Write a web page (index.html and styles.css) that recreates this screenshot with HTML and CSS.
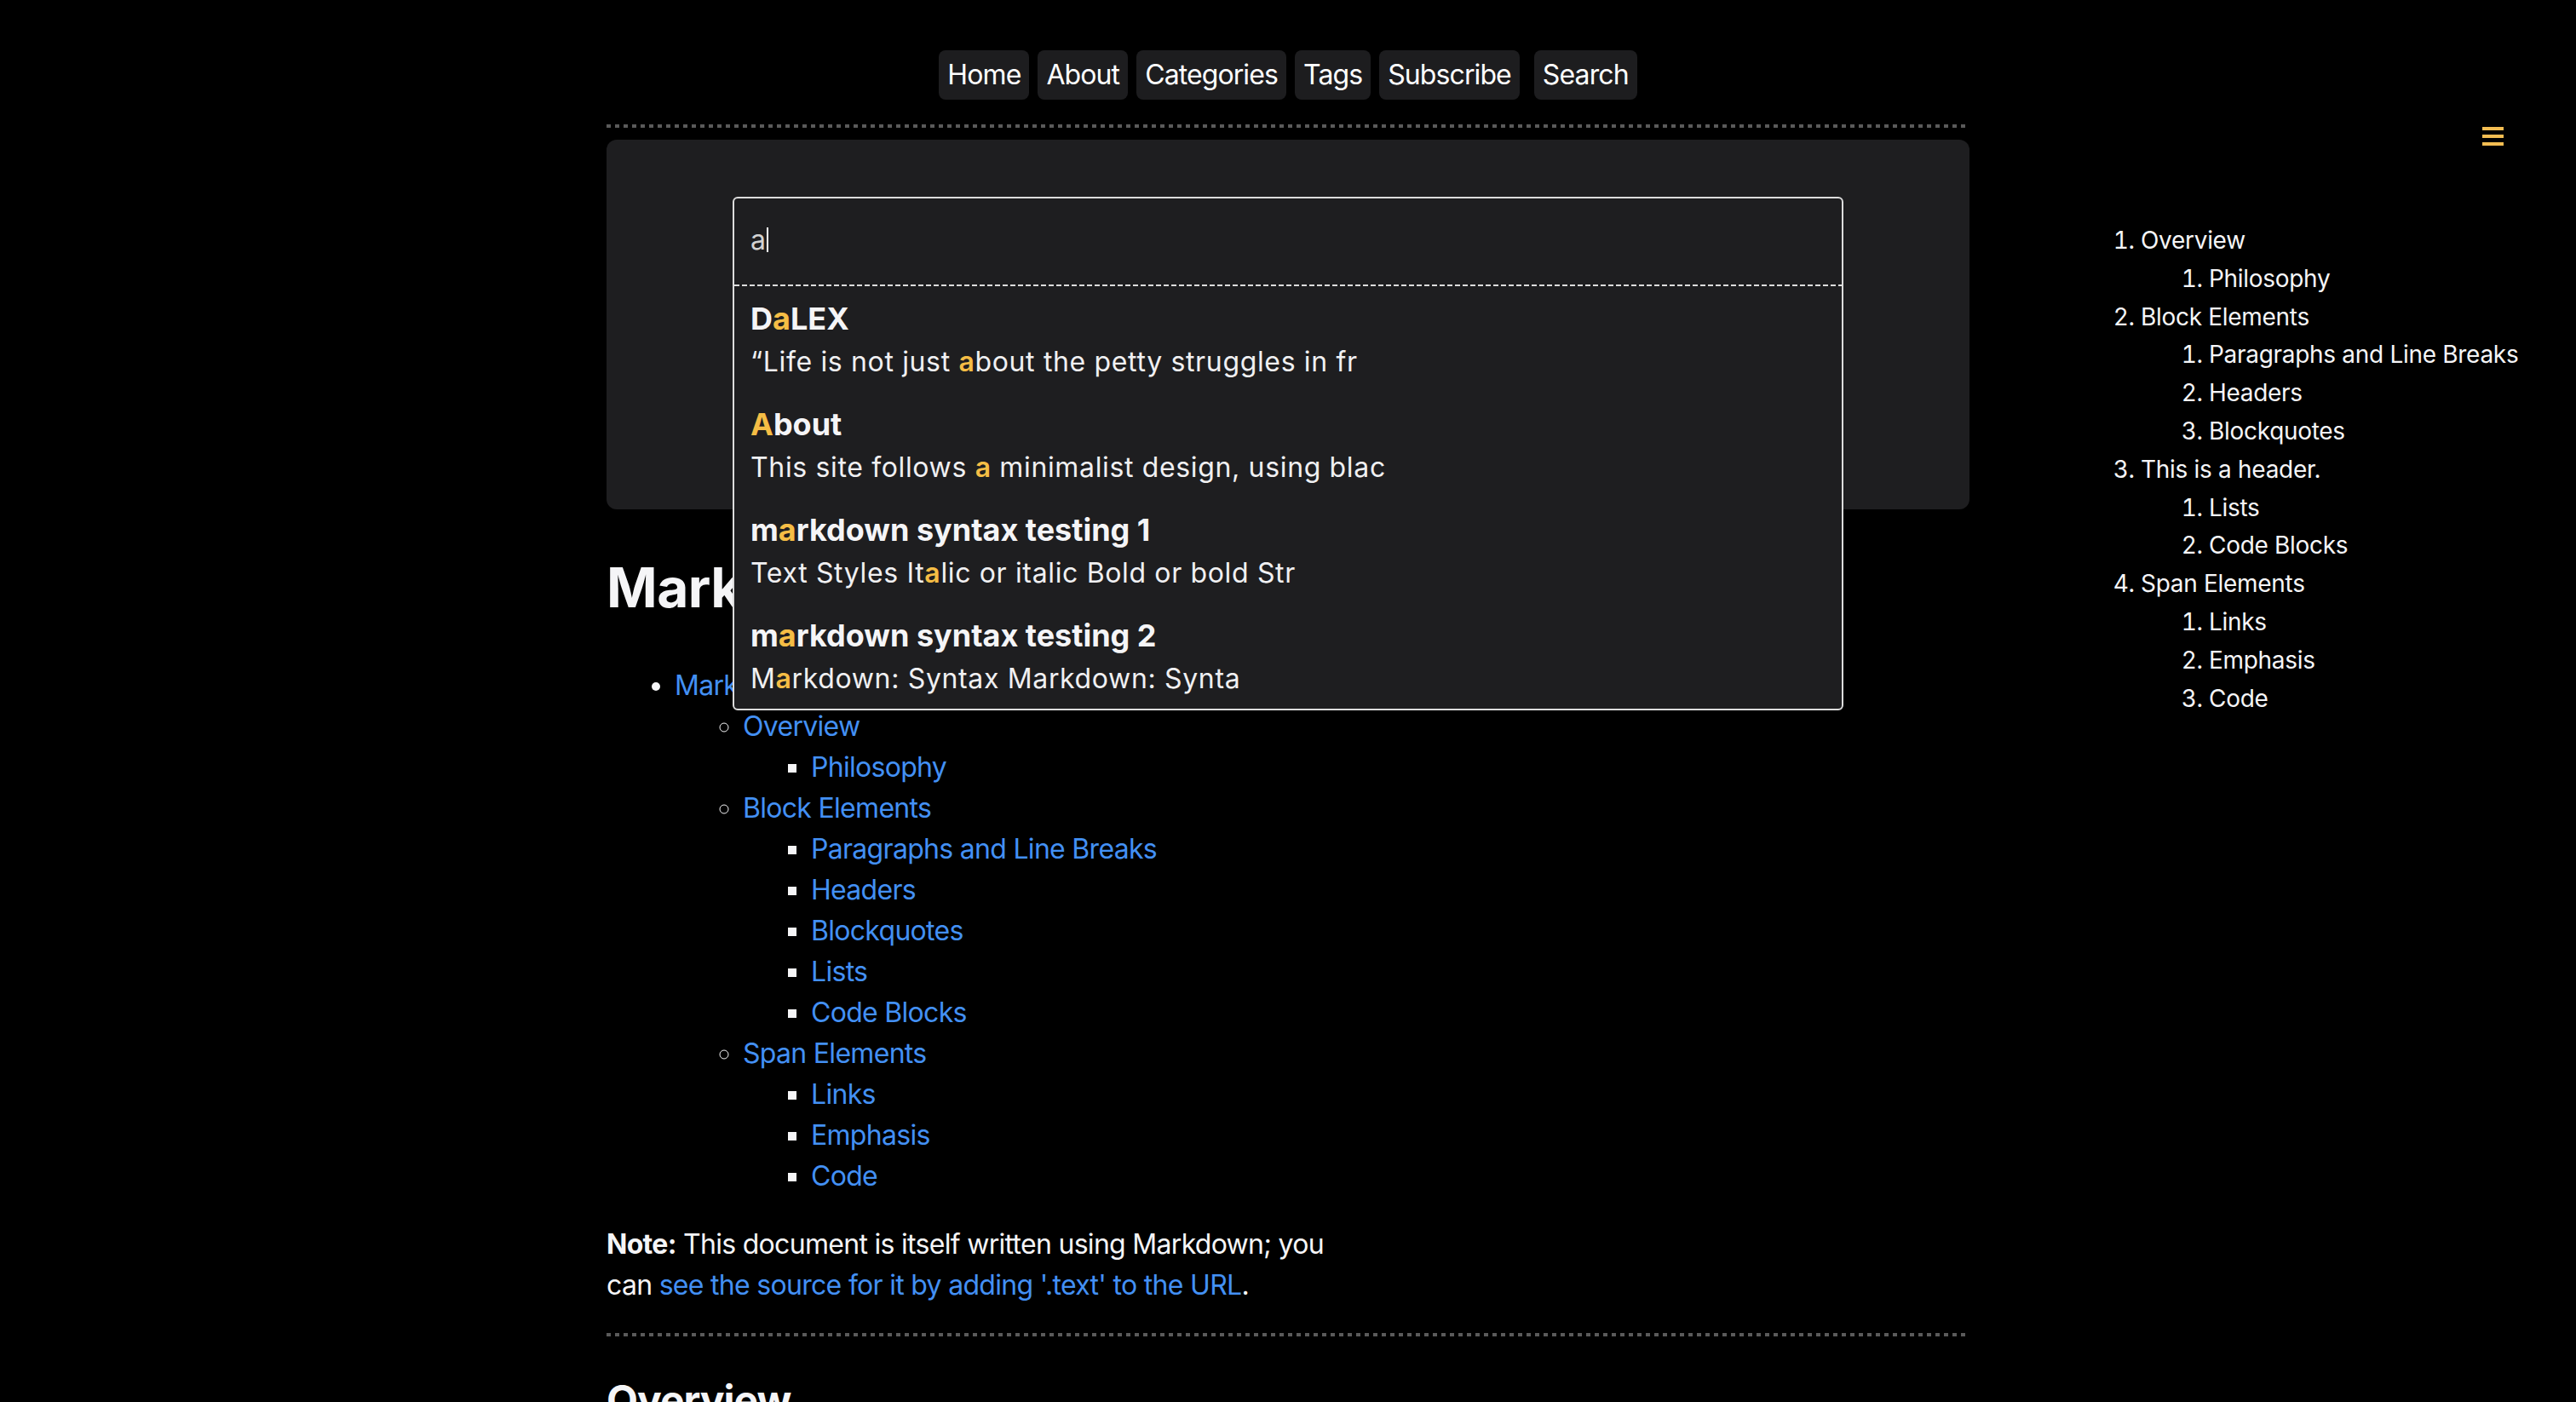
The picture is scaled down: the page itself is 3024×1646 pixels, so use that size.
FILE: index.html
```html
<!DOCTYPE html>
<html lang="en">
<head>
<meta charset="utf-8">
<title>Markdown: Syntax</title>
<link rel="stylesheet" href="styles.css">
</head>
<body>
<div class="page">
  <main class="main">
    <nav class="nav">
      <a class="nav-btn" href="#">Home</a>
      <a class="nav-btn" href="#">About</a>
      <a class="nav-btn" href="#">Categories</a>
      <a class="nav-btn" href="#">Tags</a>
      <a class="nav-btn" href="#">Subscribe</a>
      <a class="nav-btn nav-search" href="#">Search</a>
    </nav>
    <div class="rule rule-top"></div>
    <section class="hero">
      <div class="search">
        <div class="search-panel">
          <div class="search-input"><span class="query">a</span><span class="caret"></span></div>
          <div class="search-sep"></div>
          <div class="results">
            <div class="result">
              <div class="result-title">D<mark>a</mark>LEX</div>
              <div class="result-desc">“Life is not just <mark>a</mark>bout the petty struggles in fr</div>
            </div>
            <div class="result">
              <div class="result-title"><mark>A</mark>bout</div>
              <div class="result-desc">This site follows <mark>a</mark> minimalist design, using blac</div>
            </div>
            <div class="result">
              <div class="result-title">m<mark>a</mark>rkdown syntax testing 1</div>
              <div class="result-desc">Text Styles It<mark>a</mark>lic or italic Bold or bold Str</div>
            </div>
            <div class="result">
              <div class="result-title">m<mark>a</mark>rkdown syntax testing 2</div>
              <div class="result-desc">M<mark>a</mark>rkdown: Syntax Markdown: Synta</div>
            </div>
          </div>
        </div>
      </div>
    </section>
    <article class="article">
      <h1 class="title">Markdown: Syntax</h1>
      <ul class="doc-toc">
        <li><a href="#">Markdown: Syntax</a>
          <ul>
            <li><a href="#">Overview</a>
              <ul>
                <li><a href="#">Philosophy</a></li>
              </ul>
            </li>
            <li><a href="#">Block Elements</a>
              <ul>
                <li><a href="#">Paragraphs and Line Breaks</a></li>
                <li><a href="#">Headers</a></li>
                <li><a href="#">Blockquotes</a></li>
                <li><a href="#">Lists</a></li>
                <li><a href="#">Code Blocks</a></li>
              </ul>
            </li>
            <li><a href="#">Span Elements</a>
              <ul>
                <li><a href="#">Links</a></li>
                <li><a href="#">Emphasis</a></li>
                <li><a href="#">Code</a></li>
              </ul>
            </li>
          </ul>
        </li>
      </ul>
      <p class="note"><strong>Note:</strong> This document is itself written using Markdown; you can <a href="#">see the source for it by adding '.text' to the URL</a>.</p>
      <div class="rule"></div>
      <h2 class="section-title">Overview</h2>
    </article>
  </main>
  <aside class="side">
    <button class="menu-btn" aria-label="Menu">
      <svg width="25" height="22" viewBox="0 0 25 22"><rect x="0" y="0" width="25" height="4" fill="#f3bd52"/><rect x="0" y="9" width="25" height="4" fill="#f3bd52"/><rect x="0" y="18" width="25" height="4" fill="#f3bd52"/></svg>
    </button>
    <ol class="side-toc">
      <li>Overview
        <ol><li>Philosophy</li></ol>
      </li>
      <li>Block Elements
        <ol>
          <li>Paragraphs and Line Breaks</li>
          <li>Headers</li>
          <li>Blockquotes</li>
        </ol>
      </li>
      <li>This is a header.
        <ol>
          <li>Lists</li>
          <li>Code Blocks</li>
        </ol>
      </li>
      <li>Span Elements
        <ol>
          <li>Links</li>
          <li>Emphasis</li>
          <li>Code</li>
        </ol>
      </li>
    </ol>
  </aside>
</div>
</body>
</html>
```
FILE: styles.css
```css
html, body {
  margin: 0;
  padding: 0;
  background: #000;
}
body {
  color: #f5f5f7;
  font-family: Inter, "Noto Sans", sans-serif;
  font-size: 32px;
  line-height: 48px;
  letter-spacing: -0.7px;
  overflow: hidden;
}
a {
  color: #4390f4;
  text-decoration: none;
}
.page {
  display: grid;
  grid-template-columns: 1fr 1600px 1fr;
}
.main {
  grid-column: 2;
  min-width: 0;
}
.nav {
  display: flex;
  justify-content: center;
  gap: 10px;
  padding-top: 59px;
}
.nav-btn {
  display: block;
  background: #1d1d1f;
  color: #fff;
  padding: 5px 10px;
  border-radius: 8px;
  line-height: 48px;
  letter-spacing: -0.9px;
}
.nav-search {
  margin-left: 7px;
}
.rule {
  height: 4px;
  background: repeating-linear-gradient(to right, #5a5a5a 0 5px, transparent 5px 10px);
}
.rule-top {
  margin-top: 29px;
}
.hero {
  margin-top: 14px;
  height: 434px;
  box-sizing: border-box;
  padding: 67px 148px 0;
  background: #1e1e20;
  border-radius: 12px;
}
.search {
  position: relative;
  height: 103px;
}
.search-panel {
  position: absolute;
  top: 0;
  left: 0;
  right: 0;
  z-index: 5;
  background: #1e1e20;
  border: 2px solid #dcdcdc;
  border-radius: 6px;
}
.search-input {
  height: 101px;
  display: flex;
  align-items: center;
  padding: 0 19px 4px;
  box-sizing: border-box;
  color: #d2d2d2;
  letter-spacing: 0;
}
.caret {
  display: inline-block;
  width: 2px;
  height: 29px;
  margin-left: 1px;
  background: #fff;
}
.search-sep {
  height: 2px;
  background: repeating-linear-gradient(to right, #dcdcdc 0 6px, transparent 6px 9px);
}
.result {
  padding: 11px 19px;
  white-space: nowrap;
}
.result-title {
  font-size: 36px;
  line-height: 54px;
  font-weight: 700;
  letter-spacing: 0;
  color: #f5f5f7;
}
.result-desc {
  font-size: 32px;
  line-height: 48px;
  letter-spacing: 0.65px;
  color: #f0f0f2;
}
mark {
  background: none;
  color: #f5bd45;
}
.result-desc mark {
  font-weight: 600;
}
.title {
  font-size: 64px;
  line-height: 77px;
  font-weight: 700;
  letter-spacing: -0.5px;
  margin: 53px 0;
}
.doc-toc {
  margin: 0 0 32px;
  padding-left: 80px;
}
.doc-toc ul {
  margin: 0;
  padding-left: 80px;
}
.note {
  max-width: 870px;
  margin: 32px 0;
}
.note strong {
  font-weight: 700;
}
.section-title {
  font-size: 48px;
  line-height: 58px;
  font-weight: 700;
  letter-spacing: -1px;
  margin: 46px 0 0;
}
.side {
  grid-column: 3;
  padding-top: 149px;
  display: flex;
  flex-direction: column;
}
.menu-btn {
  align-self: flex-end;
  margin-right: 85px;
  padding: 0;
  border: 0;
  background: none;
  width: 25px;
  height: 22px;
  display: block;
}
.menu-btn svg {
  display: block;
}
.side-toc {
  margin: 89px 0 0 121px;
  padding-left: 80px;
  font-size: 28px;
  line-height: 44.8px;
  letter-spacing: -0.3px;
  color: #f5f5f7;
}
.side-toc ol {
  margin: 0;
  padding-left: 80px;
}
```
